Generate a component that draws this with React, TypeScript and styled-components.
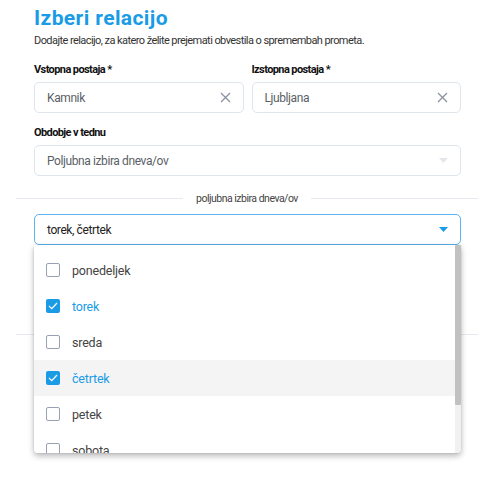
import React from "react";
import styled, { createGlobalStyle } from "styled-components";

const Global = createGlobalStyle`
  html, body { margin: 0; padding: 0; background: #fff; }
  body { font-family: Roboto, "Liberation Sans", Arial, sans-serif; color: #222; }
  * { box-sizing: border-box; }
`;

const Page = styled.div`
  width: 499px;
  height: 490px;
  padding: 0 21px 0 16px;
  overflow: hidden;
`;

const Inner = styled.div`
  padding: 0 17px 0 18px;
`;

const Title = styled.h1`
  margin: 0;
  padding-top: 5px;
  font-size: 21px;
  line-height: 26px;
  font-weight: 700;
  letter-spacing: 0.4px;
  color: #1a9be6;
`;

const Subtitle = styled.p`
  margin: 2px 0 0;
  font-size: 11px;
  line-height: 16px;
  letter-spacing: -0.57px;
  color: #333;
`;

const Row = styled.div`
  display: grid;
  grid-template-columns: 1fr 1fr;
  gap: 8px;
  margin-top: 14px;
`;

const Field = styled.div<{ $top?: number }>`
  display: flex;
  flex-direction: column;
  margin-top: ${(p) => p.$top ?? 0}px;
`;

const Label = styled.label`
  font-size: 11px;
  line-height: 14px;
  font-weight: 700;
  letter-spacing: -0.6px;
  color: #111;
  margin-bottom: 5px;
`;

const Box = styled.div<{ $focus?: boolean }>`
  height: 31px;
  border: ${(p) => (p.$focus ? "1.5px solid #5cb3ee" : "1px solid #dfe5ec")};
  border-radius: 5px;
  display: flex;
  align-items: center;
  padding: 0 12px;
  font-size: 12px;
  letter-spacing: -0.4px;
  color: ${(p) => (p.$focus ? "#222" : "#5a5f66")};
  background: #fff;
`;

const BoxText = styled.span`
  flex: 1;
`;

const Divider = styled.div<{ $top: number }>`
  display: flex;
  align-items: center;
  gap: 13px;
  margin-top: ${(p) => p.$top}px;
  font-size: 10.5px;
  letter-spacing: -0.5px;
  color: #444;
  &::before, &::after {
    content: "";
    flex: 1;
    height: 1px;
    background: #e6eaef;
  }
`;

const Line = styled.div`
  height: 1px;
  background: #e6eaef;
  margin-top: 89px;
`;

const SelectWrap = styled.div`
  position: relative;
  margin-top: 9px;
`;

const Menu = styled.div`
  position: absolute;
  top: 31px;
  left: 0;
  right: 0;
  height: 208px;
  background: #fff;
  border-radius: 0 0 4px 4px;
  box-shadow: 0 3px 6px rgba(0, 0, 0, 0.28), 0 0 2px rgba(0, 0, 0, 0.15);
  overflow: hidden;
  display: flex;
  z-index: 2;
`;

const List = styled.div`
  flex: 1;
  padding-top: 7px;
`;

const Item = styled.div<{ $hl?: boolean; $on?: boolean }>`
  height: 36px;
  flex-shrink: 0;
  display: flex;
  align-items: center;
  gap: 12px;
  padding-left: 12px;
  background: ${(p) => (p.$hl ? "#f4f4f4" : "#fff")};
  font-size: 12.5px;
  letter-spacing: -0.2px;
  color: ${(p) => (p.$on ? "#1a9be6" : "#444")};
`;

const Check = styled.span<{ $on?: boolean }>`
  width: 14px;
  height: 14px;
  border-radius: 2px;
  border: ${(p) => (p.$on ? "none" : "1.5px solid #98a2b3")};
  background: ${(p) => (p.$on ? "#1a9be6" : "#fff")};
  display: inline-flex;
  align-items: center;
  justify-content: center;
`;

const Scroll = styled.div`
  width: 6px;
  background: #f1f1f1;
  display: flex;
  flex-direction: column;
`;

const Thumb = styled.div`
  height: 160px;
  background: #c1c1c1;
  border-radius: 1px;
`;

const XIcon = () => (
  <svg width="11" height="11" viewBox="0 0 11 11">
    <path d="M1 1L10 10M10 1L1 10" stroke="#8a93a0" strokeWidth="1.3" />
  </svg>
);

const Caret = ({ color }: { color: string }) => (
  <svg width="9" height="5" viewBox="0 0 9 5">
    <path d="M0 0H9L4.5 5Z" fill={color} />
  </svg>
);

const Tick = () => (
  <svg width="10" height="8" viewBox="0 0 10 8">
    <path d="M1 4L3.8 6.6L9 1" stroke="#fff" strokeWidth="1.2" fill="none" />
  </svg>
);

const days = [
  { n: "ponedeljek", on: false },
  { n: "torek", on: true },
  { n: "sreda", on: false },
  { n: "četrtek", on: true, hl: true },
  { n: "petek", on: false },
  { n: "sobota", on: false },
];

export default function App() {
  return (
    <Page>
      <Global />
      <Inner>
        <Title>Izberi relacijo</Title>
        <Subtitle>Dodajte relacijo, za katero želite prejemati obvestila o spremembah prometa.</Subtitle>
        <Row>
          <Field>
            <Label>Vstopna postaja *</Label>
            <Box>
              <BoxText>Kamnik</BoxText>
              <XIcon />
            </Box>
          </Field>
          <Field>
            <Label>Izstopna postaja *</Label>
            <Box>
              <BoxText>Ljubljana</BoxText>
              <XIcon />
            </Box>
          </Field>
        </Row>
        <Field $top={13}>
          <Label>Obdobje v tednu</Label>
          <Box>
            <BoxText>Poljubna izbira dneva/ov</BoxText>
            <Caret color="#e3e7ec" />
          </Box>
        </Field>
      </Inner>
      <Divider $top={16}>poljubna izbira dneva/ov</Divider>
      <Inner>
        <SelectWrap>
          <Box $focus>
            <BoxText>torek, četrtek</BoxText>
            <Caret color="#1a9be6" />
          </Box>
          <Menu>
            <List>
              {days.map((d) => (
                <Item key={d.n} $hl={d.hl} $on={d.on}>
                  <Check $on={d.on}>{d.on && <Tick />}</Check>
                  {d.n}
                </Item>
              ))}
            </List>
            <Scroll>
              <Thumb />
            </Scroll>
          </Menu>
        </SelectWrap>
      </Inner>
      <Line />
    </Page>
  );
}
